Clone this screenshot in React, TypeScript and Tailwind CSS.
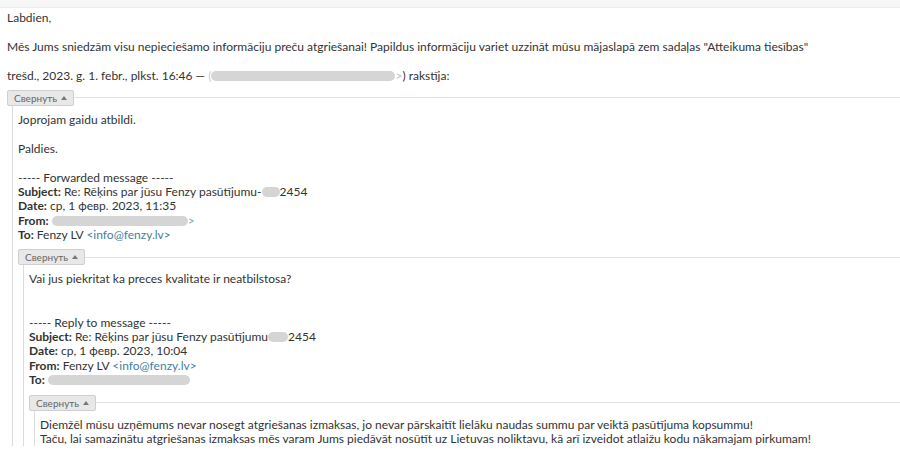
import type { ReactNode } from 'react';

function Blur({ w, className = '' }: { w: number; className?: string }) {
  return (
    <span
      className={`inline-block h-[10px] align-[-1px] rounded-full bg-[#d5d5d5] blur-[0.6px] ${className}`}
      style={{ width: w }}
    />
  );
}

function Collapse() {
  return (
    <div className="flex items-center">
      <button
        type="button"
        className="flex h-[16px] items-center gap-[4px] rounded-[2px] border border-[#cfcfcf] bg-[#e8e8e8] px-[6px] text-[10px] leading-none text-[#666]"
      >
        Свернуть
        <span className="h-0 w-0 border-x-[3px] border-b-[4px] border-x-transparent border-b-[#777]" />
      </button>
      <div className="h-px flex-1 bg-[#e2e2e2]" />
    </div>
  );
}

function Quote({ children }: { children: ReactNode }) {
  return (
    <div className="mt-[7px]">
      <Collapse />
      <div className="ml-[5px] border-l border-[#dcdcdc] pl-[5px] pt-[7px]">{children}</div>
    </div>
  );
}

const Blank = () => <div className="h-[14.4px]" />;

const Link = ({ children }: { children: ReactNode }) => <span className="text-[#3f7fa6]">{children}</span>;

export default function App() {
  return (
    <div className="min-h-[453px] bg-white font-['Lato',sans-serif] text-[12px] leading-[1.2] text-[#333]">
      <div className="h-[8px] border-b border-[#ececec] bg-[#f7f7f7]" />
      <div className="pl-[7px] pt-[3px]">
        <div>Labdien,</div>
        <Blank />
        <div>
          Mēs Jums sniedzām visu nepieciešamo informāciju preču atgriešanai! Papildus informāciju variet uzzināt mūsu
          mājaslapā zem sadaļas "Atteikuma tiesības"
        </div>
        <Blank />
        <div>
          trešd., 2023. g. 1. febr., plkst. 16:46 — <span className="text-[#ccc]">(</span>
          <Blur w={184} />
          <span className="text-[#bbb]">&gt;</span>) rakstīja:
        </div>

        <Quote>
          <div>Joprojam gaidu atbildi.</div>
          <Blank />
          <div>Paldies.</div>
          <Blank />
          <div>----- Forwarded message -----</div>
          <div>
            <b>Subject:</b> Re: Rēķins par jūsu Fenzy pasūtījumu-
            <Blur w={18} />
            2454
          </div>
          <div>
            <b>Date:</b> ср, 1 февр. 2023, 11:35
          </div>
          <div>
            <b>From:</b>
            <Blur w={136} className="ml-[3px]" />
            <span className="text-[#7aa6c2]">&gt;</span>
          </div>
          <div>
            <b>To:</b> Fenzy LV <Link>&lt;info@fenzy.lv&gt;</Link>
          </div>

          <Quote>
            <div>Vai jus piekritat ka preces kvalitate ir neatbilstosa?</div>
            <Blank />
            <Blank />
            <div>----- Reply to message -----</div>
            <div>
              <b>Subject:</b> Re: Rēķins par jūsu Fenzy pasūtījumu
              <Blur w={20} />
              2454
            </div>
            <div>
              <b>Date:</b> ср, 1 февр. 2023, 10:04
            </div>
            <div>
              <b>From:</b> Fenzy LV <Link>&lt;info@fenzy.lv&gt;</Link>
            </div>
            <div>
              <b>To:</b>
              <Blur w={142} className="ml-[3px]" />
            </div>

            <Quote>
              <div>
                Diemžēl mūsu uzņēmums nevar nosegt atgriešanas izmaksas, jo nevar pārskaitīt lielāku naudas summu par
                veiktā pasūtījuma kopsummu!
              </div>
              <div>
                Taču, lai samazinātu atgriešanas izmaksas mēs varam Jums piedāvāt nosūtīt uz Lietuvas noliktavu, kā arī
                izveidot atlaižu kodu nākamajam pirkumam!
              </div>
            </Quote>
          </Quote>
        </Quote>
      </div>
    </div>
  );
}
